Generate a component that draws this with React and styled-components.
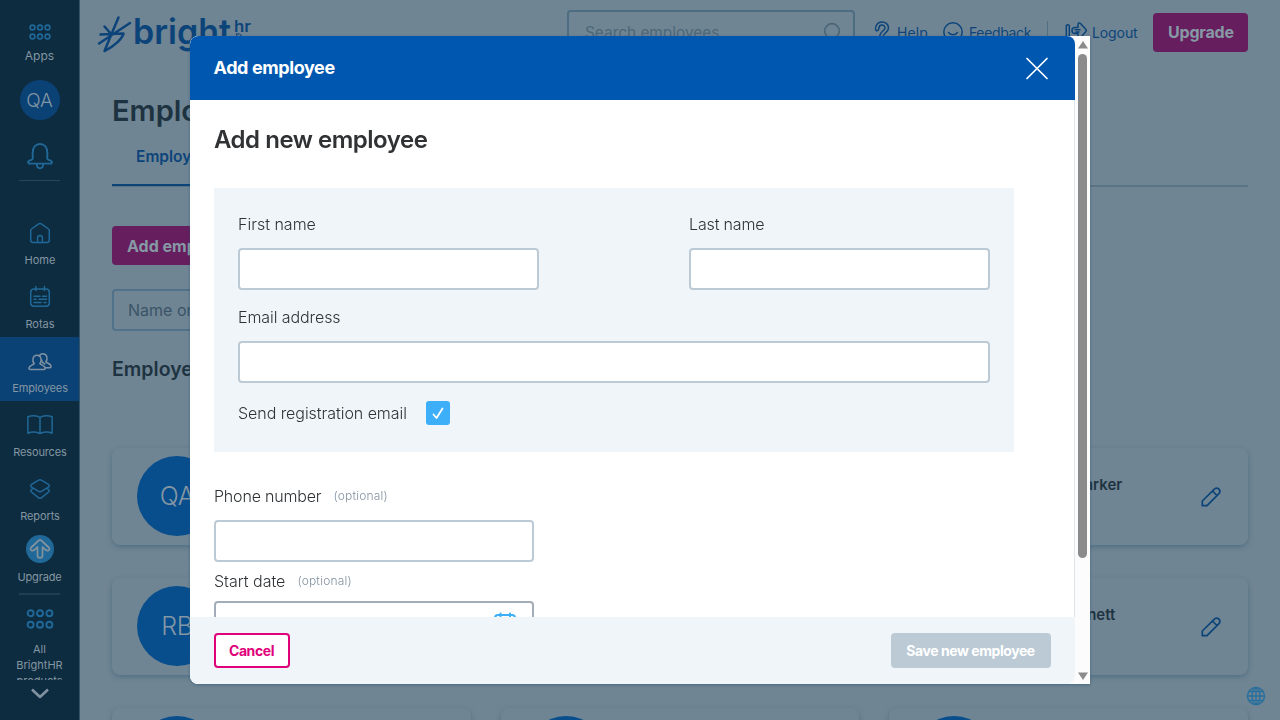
import React from "react";
import styled, { createGlobalStyle } from "styled-components";

const Global = createGlobalStyle`
  * { box-sizing: border-box; }
  body { margin: 0; font-family: Inter, "Liberation Sans", sans-serif; overflow: hidden; background: #708593; }
  h1, h2, h3, p { margin: 0; }
`;

const Shell = styled.div`
  display: flex;
  width: 1280px;
  height: 720px;
  overflow: hidden;
  background: #708593;
`;

/* Sidebar */
const Sidebar = styled.nav`
  width: 80px;
  flex: none;
  height: 720px;
  background: #0d2c40;
  border-right: 1px solid #32536a;
  display: flex;
  flex-direction: column;
  align-items: center;
  color: #8496a2;
  font-size: 11px;
`;
const AppsLink = styled.div`
  padding-top: 23px;
  height: 80px;
  display: flex;
  flex-direction: column;
  align-items: center;
  font-size: 12px;
  line-height: 15px;
  svg { margin-bottom: 7px; }
`;
const UserBadge = styled.div`
  width: 40px;
  height: 40px;
  flex: none;
  border-radius: 50%;
  background: #0a4276;
  display: grid;
  place-items: center;
  font-size: 19px;
  font-weight: 300;
  letter-spacing: -0.1px;
`;
const BellSlot = styled.div`
  height: 61px;
  width: 41px;
  flex: none;
  padding-top: 22px;
  display: flex;
  justify-content: center;
  border-bottom: 1px solid #274759;
  margin-bottom: 28px;
`;
const NavItem = styled.div`
  width: 100%;
  height: 64px;
  flex: none;
  padding: 12px 0 0 1px;
  display: flex;
  flex-direction: column;
  align-items: center;
  gap: 8px;
  line-height: 14px;
  letter-spacing: ${(p) => p.$ls || 0}px;
  background: ${(p) => (p.$active ? "#0a4276" : "transparent")};
`;
const UpgradeItem = styled.div`
  height: 66px;
  width: 41px;
  flex: none;
  margin-bottom: 12px;
  padding-top: 6px;
  display: flex;
  flex-direction: column;
  align-items: center;
  gap: 7px;
  line-height: 14px;
  letter-spacing: -0.15px;
  border-bottom: 2px solid #203f51;
  svg { flex: none; }
`;
const AllProducts = styled.div`
  height: 73px;
  flex: none;
  overflow: hidden;
  text-align: center;
  line-height: 16px;
  svg { display: block; margin: 2px auto 12px; }
`;

/* Page */
const Page = styled.main`
  flex: 1;
  min-width: 0;
  padding: 0 32px;
`;
const TopBar = styled.header`
  height: 64px;
  display: flex;
  align-items: flex-start;
  margin-left: -16px;
`;
const Logo = styled.svg`
  margin-top: 12px;
  flex: none;
`;
const SearchBox = styled.div`
  width: 288px;
  height: 44px;
  flex: none;
  margin: 10px 0 0 311px;
  padding: 0 10px 0 16px;
  display: flex;
  align-items: center;
  justify-content: space-between;
  border: 2px solid #4c6c81;
  border-radius: 4px;
  color: #4c6779;
  font-size: 15.4px;
`;
const TopLinks = styled.div`
  display: flex;
  align-items: center;
  height: 24px;
  flex: none;
  margin: 20px 0 0 18px;
  color: #0c447a;
  font-size: 14px;
`;
const TopLink = styled.span`
  display: flex;
  align-items: center;
  gap: ${(p) => p.$gap || 6}px;
  width: ${(p) => p.$w}px;
  white-space: nowrap;
  letter-spacing: ${(p) => p.$ls || 0}px;
`;
const LinkDivider = styled.i`
  width: 1px;
  height: 22px;
  background: #507084;
  margin-right: 17px;
`;
const PinkButton = styled.div`
  width: ${(p) => p.$w}px;
  height: 39px;
  flex: none;
  margin: ${(p) => p.$margin || 0};
  padding: 0 15px;
  border-radius: 4px;
  background: #661e5e;
  color: #8799a5;
  font-size: 16px;
  font-weight: 700;
  line-height: ${(p) => p.$lh || 39}px;
  white-space: nowrap;
  overflow: hidden;
  letter-spacing: ${(p) => p.$ls || 0}px;
`;
const PageTitle = styled.h1`
  padding-top: 29px;
  font-size: 29px;
  line-height: 36px;
  font-weight: 600;
  color: #1e3341;
`;
const Tabs = styled.div`
  height: 58px;
  border-bottom: 2px solid #5b7485;
  display: flex;
`;
const Tab = styled.div`
  width: 140px;
  height: 57px;
  padding: 18px 24px 0;
  border-bottom: 2px solid #0c447a;
  color: #0c447a;
  font-size: 15.5px;
  font-weight: 600;
  line-height: 20px;
`;
const FilterBox = styled.div`
  width: 300px;
  height: 42px;
  margin-top: 24px;
  padding: 0 14px;
  border: 2px solid #50718a;
  border-radius: 4px;
  color: #395467;
  font-size: 16px;
  line-height: 39px;
`;
const SectionTitle = styled.h2`
  margin-top: 25px;
  height: 92px;
  font-size: 19.5px;
  line-height: 26px;
  font-weight: 600;
  color: #1e3341;
`;
const CardGrid = styled.section`
  display: grid;
  grid-template-columns: repeat(3, 1fr);
  column-gap: 30px;
  row-gap: 33px;
`;
const Card = styled.article`
  height: 97px;
  padding: 0 25px 1px 25px;
  display: flex;
  align-items: center;
  border-radius: 8px;
  background: #708593;
  box-shadow: 0 2px 5px rgba(50, 90, 120, 0.5);
`;
const Avatar = styled.div`
  width: 80px;
  height: 80px;
  flex: none;
  border-radius: 50%;
  background: #084e8d;
  color: #8496a3;
  display: grid;
  place-items: center;
  font-size: 25px;
  font-weight: 300;
  letter-spacing: -0.2px;
`;
const PersonName = styled.h3`
  width: ${(p) => p.$w}px;
  padding-bottom: 23px;
  text-align: right;
  white-space: nowrap;
  font-size: 15px;
  font-weight: 600;
  color: #1e3341;
`;
const EditSlot = styled.span`
  margin-left: auto;
  padding-top: 1px;
  display: flex;
`;
const LanguageButton = styled.div`
  position: fixed;
  right: 14px;
  bottom: 14px;
  display: flex;
`;

/* Dialog */
const Backdrop = styled.div`
  position: fixed;
  inset: 0;
  display: flex;
  justify-content: center;
  align-items: flex-start;
  padding-top: 36px;
`;
const DialogFrame = styled.div`
  width: 900px;
  height: 648px;
  display: flex;
  border-radius: 8px 0 0 8px;
  overflow: hidden;
  background: #fcfcfc;
  box-shadow: 0 1px 3px rgba(30, 80, 120, 0.5);
`;
const Dialog = styled.div`
  width: 885px;
  height: 648px;
  display: flex;
  flex-direction: column;
  border-radius: 8px;
  overflow: hidden;
  background: #fff;
`;
const DialogHeader = styled.header`
  height: 64px;
  flex: none;
  padding: 0 26px 0 23.5px;
  display: flex;
  align-items: center;
  justify-content: space-between;
  background: #0057b0;
  color: #fff;
  font-size: 18px;
  font-weight: 700;
  letter-spacing: -0.4px;
  line-height: 22px;
`;
const DialogBody = styled.div`
  height: 517px;
  overflow: hidden;
  padding: 24px 24px 0;
  color: #2f3336;
  border-right: 1px solid #dfe6ea;
`;
const DialogTitle = styled.h2`
  height: 64px;
  font-size: 24px;
  line-height: 32px;
  font-weight: 600;
  color: #303234;
  letter-spacing: -0.48px;
`;
const Panel = styled.div`
  width: 800px;
  height: 264px;
  padding: 24px 24px 0;
  margin-bottom: 32px;
  background: #f0f5f9;
`;
const FieldRow = styled.div`
  display: flex;
  justify-content: space-between;
`;
const Field = styled.label`
  display: block;
  width: ${(p) => p.$w}px;
  height: ${(p) => p.$h}px;
`;
const LabelText = styled.div`
  display: flex;
  align-items: center;
  gap: 12px;
  height: 24px;
  font-size: 16px;
  font-weight: 300;
  line-height: 24px;
  white-space: nowrap;
  letter-spacing: ${(p) => p.$ls || 0}px;
`;
const Optional = styled.span`
  font-size: 12px;
  font-weight: 300;
  letter-spacing: 0.2px;
  color: #8292a1;
`;
const Input = styled.div`
  height: 42px;
  margin-top: ${(p) => p.$mt || 12}px;
  padding: 8px 16px;
  display: flex;
  justify-content: flex-end;
  background: #fff;
  border: 2px solid ${(p) => p.$border || "#bccad5"};
  border-radius: 4px;
`;
const CheckRow = styled.div`
  display: flex;
  align-items: center;
  gap: 19px;
  padding-top: 3px;
`;
const Checkbox = styled.span`
  width: 24px;
  height: 24px;
  border-radius: 3px;
  background: #3daef8;
  display: grid;
  place-items: center;
`;
const DialogFooter = styled.footer`
  height: 67px;
  flex: none;
  padding: 16px 24px;
  display: flex;
  justify-content: space-between;
  background: #f0f5f9;
`;
const FooterButton = styled.div`
  width: ${(p) => p.$w}px;
  height: 35px;
  display: grid;
  place-items: center;
  padding-right: 1px;
  border-radius: 4px;
  border: 2px solid ${(p) => (p.$primary ? "#bccad5" : "#e0007a")};
  background: ${(p) => (p.$primary ? "#bccad5" : "#fff")};
  color: ${(p) => (p.$primary ? "#fff" : "#e0007a")};
  font-size: 14px;
  font-weight: 700;
  white-space: nowrap;
  letter-spacing: -0.43px;
`;
const Scrollbar = styled.div`
  width: 15px;
  height: 648px;
  padding: 5px 3px 4px;
  display: flex;
  flex-direction: column;
  align-items: center;
  background: #fcfcfc;
`;
const Thumb = styled.div`
  width: 9px;
  height: 504px;
  margin: 5px 0 auto;
  border-radius: 5px;
  background: #8b8b8b;
`;

/* Icons */
const Svg = ({ w = 24, h = w, box, color = "#206897", sw = 1.5, children }) => (
  <svg width={w} height={h} viewBox={box || `0 0 ${w} ${h}`} fill="none" stroke={color} strokeWidth={sw} strokeLinecap="round" strokeLinejoin="round">
    {children}
  </svg>
);
const DotsIcon = ({ big }) => {
  const s = big ? 9.4 : 7.5;
  const r = big ? 3 : 2.4;
  const w = big ? 28 : 24;
  const h = big ? 20 : 18;
  return (
    <Svg w={w} h={h} sw={big ? 1.9 : 1.6}>
      {[0, 1].map((y) => [0, 1, 2].map((x) => (
        <circle key={`${x}${y}`} cx={w / 2 + (x - 1) * s} cy={h / 2 + (y - 0.5) * (big ? 11.4 : 9)} r={r} />
      )))}
    </Svg>
  );
};
const BellIcon = () => (
  <Svg w={26} h={28} sw={1.9}>
    <path d="M5.700 10.500C5.700 5.500 8.500 2 13 2s7.300 3.500 7.300 8.500v6.300c0 1.200 4.700 1.400 4.700 3.200 0 1.100-.8 1.600-1.800 1.600H2.800C1.800 21.600 1 21.100 1 20c0-1.800 4.700-2 4.700-3.200z" />
    <path d="M9.700 22c.2 3 1.600 4.300 3.300 4.300s3.100-1.300 3.300-4.300" />
  </Svg>
);
const HomeIcon = () => (
  <Svg>
    <path d="M2.700 9.800c0-.8.200-1.300.8-1.800L10.700 2.900c.9-.6 1.700-.6 2.600 0L20.500 8c.6.500.8 1 .8 1.800v9.100c0 1.500-.8 2.500-2.300 2.500H5c-1.500 0-2.300-1-2.300-2.500z" />
    <path d="M9.600 21.200v-4.400c0-1.400 1-2.400 2.400-2.400s2.400 1 2.400 2.400v4.400" />
  </Svg>
);
const RotaIcon = () => (
  <Svg>
    <rect x="2.700" y="4" width="18.600" height="17.300" rx="3.200" />
    <path d="M7.800 1.500v4M16.400 1.500v4M6 11.200h6M14.500 11.200h4M6 14.300h2M11 14.300h7.500M6 17.400h7M16 17.400h2" />
  </Svg>
);
const PeopleIcon = () => (
  <Svg color="#8092a0">
    <path d="M1 19.600c0-3.200 3.200-3.100 5.200-5C4 12.400 4.300 6.300 9 6.300s5 6.100 2.900 8.300c2 1.900 5.300 1.800 5.300 5 0 .6-.5 1-1.200 1H2.200c-.7 0-1.200-.4-1.200-1z" />
    <path d="M11.200 7.100C12 5.200 13.400 4.700 15 4.700c4.400 0 5 5.900 2.800 8.200 2 1.800 5.200 1.600 5.200 4.900 0 .6-.5 1-1.100 1h-4.500M13.600 11c.2 2 1.200 3 3.100 4" />
  </Svg>
);
const BookIcon = () => (
  <Svg w={28} h={24}>
    <path d="M14 4.500C11 2.300 5.500 2.200 1.900 3.700v16.500c3.600-1.700 9.100-1.600 12.100.3 3-1.900 8.500-2 12.100-.3V3.700C22.500 2.200 17 2.300 14 4.500zM14 4.500v16" />
  </Svg>
);
const LayersIcon = () => (
  <Svg>
    <path d="M10.600 3.100c1-.6 1.800-.6 2.800 0l7 4.200c1.300.8 1.300 2 0 2.800l-7 4.300c-1 .6-1.800.6-2.800 0l-7-4.300c-1.300-.8-1.300-2 0-2.800z" />
    <path d="M4.900 11.600l-1.200.7c-1.300.9-1.300 2 0 2.900l6.900 5.600c1 .7 1.800.7 2.800 0l6.900-5.600c1.300-.9 1.300-2 0-2.900l-1.200-.7" />
  </Svg>
);
const UpgradeIcon = () => (
  <Svg w={28}>
    <circle cx="14" cy="14" r="14" fill="#206897" stroke="none" />
    <path stroke="#8092a0" strokeWidth="1.700" d="M12.700 5.500 5.100 12.500c-1.300 1.500-.2 3.200 1.400 3.200.8 0 1.700-.6 2.500-1.400l2.500-2.300v8.400c0 3.300 5 3.300 5 0V12l2.500 2.300c.8.800 1.700 1.400 2.500 1.400 1.600 0 2.700-1.700 1.400-3.200L15.300 5.500c-.9-.9-1.700-.9-2.600 0z" />
  </Svg>
);
const PencilIcon = () => (
  <Svg w={24} color="#0c447a" sw={1.7}>
    <path d="M3.300 20.700V16L15.600 3.900c3.200-2.300 6.800 1.200 4.600 4.500L8 20.700zM13.600 6l4.300 4.500" />
  </Svg>
);

const Employee = ({ initials, name, width }) => (
  <Card>
    <Avatar>{initials}</Avatar>
    <PersonName $w={width}>{name}</PersonName>
    <EditSlot><PencilIcon /></EditSlot>
  </Card>
);

export default function App() {
  return (
    <>
      <Global />
      <Shell>
        <Sidebar>
          <AppsLink><DotsIcon />Apps</AppsLink>
          <UserBadge>QA</UserBadge>
          <BellSlot><BellIcon /></BellSlot>
          <NavItem><HomeIcon />Home</NavItem>
          <NavItem><RotaIcon />Rotas</NavItem>
          <NavItem $active $ls={-0.1}><PeopleIcon />Employees</NavItem>
          <NavItem $ls={-0.15}><BookIcon />Resources</NavItem>
          <NavItem $ls={-0.1}><LayersIcon />Reports</NavItem>
          <UpgradeItem><UpgradeIcon />Upgrade</UpgradeItem>
          <AllProducts><DotsIcon big />All<br />BrightHR<br />products</AllProducts>
          <Svg w={22} h={26} color="#8092a0" sw={2.6}><path d="M3 9.500l8 7.500 8-7.500" strokeLinecap="butt" /></Svg>
        </Sidebar>
        <Page>
          <TopBar>
            <Logo width="160" height="48" viewBox="0 0 160 48">
              <g fill="none" stroke="#0c447a" strokeWidth="2.500" strokeLinecap="round" strokeLinejoin="round">
                <path d="M22.500 5.500 15.500 22M34 11 3 31.500M8.500 14.500l7 8M4.500 22.500l11-.5 12-.5c-1 5-10 13.500-19 17.500l7-17" />
              </g>
              <text x="37" y="32" fill="#0c447a" fontSize="35" fontWeight="600" textLength="98" lengthAdjust="spacingAndGlyphs">bright</text>
              <text x="138" y="20" fill="#0c447a" fontSize="16" fontWeight="600" textLength="17" lengthAdjust="spacingAndGlyphs">hr</text>
              <text x="139" y="32" fill="#0c447a" fontSize="14" textLength="15">lite</text>
            </Logo>
            <SearchBox>
              Search employees
              <Svg w={20} color="#4c6779" sw={1.7}><circle cx="9" cy="9" r="7.300" /><path d="M14 14.500l4 4" /></Svg>
            </SearchBox>
            <TopLinks>
              <TopLink $w={70} $ls={0.1}>
                <Svg w={18} h={24} color="#0c447a"><path d="M2.600 9.500C1.600-.5 15.500 0 15.500 8c0 4.500-6 5.500-6 10h-3c0-7 5.500-7 5.500-10 0-4-6-4-6.200.5 0 2.500-3 3-3.200 1zM6.500 20.500h3v2h-3z" /></Svg>
                Help
              </TopLink>
              <TopLink $w={104} $ls={-0.35}>
                <Svg w={20} color="#0c447a"><circle cx="10" cy="10" r="9.200" /><path d="M5.500 10.500c2.500 3 6.500 3 9 0" /></Svg>
                Feedback
              </TopLink>
              <LinkDivider />
              <TopLink $w={88} $ls={-0.1} $gap={5}>
                <Svg w={22} color="#0c447a"><path d="M1.300 4.500q1.500-1.500 3 0v13h-3zM13 6.500V3.500c0-1.500 1.500-2 2.500-1l5 5.500c1 1 1 2 0 3l-5 5.500c-1 1-2.500.5-2.500-1v-3h-3c-4 0-4-6 0-6zM10 8.700h5M11 11h3" /></Svg>
                Logout
              </TopLink>
            </TopLinks>
            <PinkButton $w={95} $margin="13px 0 0 auto" $ls={-0.2}>Upgrade</PinkButton>
          </TopBar>
          <PageTitle>Employees</PageTitle>
          <Tabs><Tab>Employees</Tab></Tabs>
          <PinkButton $w={138} $lh={40} $margin="39px 0 0">Add employee</PinkButton>
          <FilterBox>Name or job title</FilterBox>
          <SectionTitle>Employees</SectionTitle>
          <CardGrid>
            <Employee initials="QA" />
            <Employee initials="MC" />
            <Employee initials="OP" name="Oliver Parker" width={128} />
            <Employee initials="RB" />
            <Employee initials="SJ" />
            <Employee initials="LB" name="Lucy Bennett" width={121} />
            <Employee />
            <Employee />
            <Employee />
          </CardGrid>
        </Page>
        <LanguageButton>
          <Svg w={20} color="#296f9d" sw={1.4}>
            <circle cx="10" cy="10" r="8.500" /><ellipse cx="10" cy="10" rx="4" ry="8.500" /><path d="M10 1.500v17M1.500 10h17M3 5.500h14M3 14.500h14" />
          </Svg>
        </LanguageButton>
      </Shell>
      <Backdrop>
        <DialogFrame role="dialog">
          <Dialog>
            <DialogHeader>
              Add employee
              <Svg w={24} color="#fff" sw={1.7}><path d="M2 2.500l20 20M22 2.500l-20 20" /></Svg>
            </DialogHeader>
            <DialogBody>
              <DialogTitle>Add new employee</DialogTitle>
              <Panel>
                <FieldRow>
                  <Field $w={301} $h={93}><LabelText>First name</LabelText><Input /></Field>
                  <Field $w={301} $h={93}><LabelText $ls={-0.15}>Last name</LabelText><Input /></Field>
                </FieldRow>
                <Field $w={752} $h={93}><LabelText $ls={-0.08}>Email address</LabelText><Input /></Field>
                <CheckRow>
                  <LabelText $ls={-0.05}>Send registration email</LabelText>
                  <Checkbox><Svg w={14} color="#fff" sw={1.8}><path d="M2.500 8.500 5.500 12 11.500 2.500" /></Svg></Checkbox>
                </CheckRow>
              </Panel>
              <Field $w={320} $h={85}><LabelText $ls={-0.18}>Phone number<Optional>(optional)</Optional></LabelText><Input /></Field>
              <Field $w={320} $h={85}>
                <LabelText>Start date<Optional>(optional)</Optional></LabelText>
                <Input $mt={8} $border="#a3adb9">
                  <Svg w={22} color="#3daef8" sw={2}><rect x="1" y="4" width="20" height="17" rx="3" /><path d="M6.500 2.500v3M16 2.500v3" /></Svg>
                </Input>
              </Field>
            </DialogBody>
            <DialogFooter>
              <FooterButton $w={76}>Cancel</FooterButton>
              <FooterButton $w={160} $primary>Save new employee</FooterButton>
            </DialogFooter>
          </Dialog>
          <Scrollbar>
            <Svg w={10} h={8} color="none"><path d="M5 0 10 7.500H0z" fill="#8b8b8b" /></Svg>
            <Thumb />
            <Svg w={10} h={8} color="none"><path d="M5 8 10 .5H0z" fill="#8b8b8b" /></Svg>
          </Scrollbar>
        </DialogFrame>
      </Backdrop>
    </>
  );
}
